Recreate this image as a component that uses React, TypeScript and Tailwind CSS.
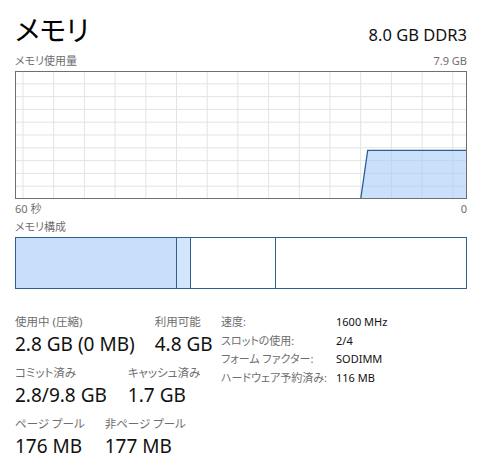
const font = { fontFamily: '"Noto Sans", "Noto Sans CJK JP", sans-serif', fontFeatureSettings: '"palt"' };

function UsageGraph() {
  const cols = Array.from({ length: 15 }, (_, i) => 8 + i * 30.7);
  const rows = Array.from({ length: 9 }, (_, i) => (i + 1) * 12.8);
  return (
    <svg width="452" height="128" viewBox="0 0 452 128" className="block">
      <rect x="0" y="0" width="452" height="128" fill="#ffffff" />
      {cols.map((x) => (
        <line key={"c" + x} x1={x} y1="0" x2={x} y2="128" stroke="#e3e3e3" strokeWidth="1" />
      ))}
      {rows.map((y) => (
        <line key={"r" + y} x1="0" y1={y} x2="452" y2={y} stroke="#e3e3e3" strokeWidth="1" />
      ))}
      <polygon points="345.7,128 352.7,79.3 452,79.3 452,128" fill="#a8cbf7" fillOpacity="0.6" />
      <polyline points="345.7,128 352.7,79.3 452,79.3" fill="none" stroke="#2b5f9c" strokeWidth="1.3" />
      <rect x="0.5" y="0.5" width="451" height="127" fill="none" stroke="#6f6f6f" strokeWidth="1" />
    </svg>
  );
}

function Stat({ label, value }: { label: string; value: string }) {
  return (
    <div className="flex flex-col">
      <span className="text-[11.5px] leading-[16px] text-[#6e6e6e]">{label}</span>
      <span className="text-[19px] leading-[29px] text-[#111]">{value}</span>
    </div>
  );
}

export default function App() {
  const specs = [
    ["速度:", "1600 MHz"],
    ["スロットの使用:", "2/4"],
    ["フォーム ファクター:", "SODIMM"],
    ["ハードウェア予約済み:", "116 MB"],
  ];
  return (
    <div className="w-[490px] h-[475px] bg-white pl-[15px] pr-[23px] pt-[12px]" style={font}>
      <div className="flex justify-between items-end">
        <h1 className="text-[28px] leading-[36px] text-black font-normal">メモリ</h1>
        <span className="text-[16.5px] leading-[22px] text-[#111] mb-[2px]">8.0 GB DDR3</span>
      </div>
      <div className="flex justify-between text-[11px] leading-[14px] text-[#6e6e6e] mt-[6px] mb-[3px]">
        <span>メモリ使用量</span>
        <span>7.9 GB</span>
      </div>
      <UsageGraph />
      <div className="flex justify-between text-[11px] leading-[14px] text-[#6e6e6e] mt-[3px]">
        <span>60 秒</span>
        <span>0</span>
      </div>
      <div className="text-[11px] leading-[14px] text-[#6e6e6e] mt-[4px] mb-[3px]">メモリ構成</div>
      <div className="flex w-[452px] h-[52px] border border-[#2d5f8f]">
        <div className="w-[161px] h-full bg-[#c8defb] border-r border-[#2d5f8f]" />
        <div className="w-[14px] h-full bg-[#d3e5fb] border-r border-[#2d5f8f]" />
        <div className="w-[85px] h-full bg-white border-r border-[#2d5f8f]" />
        <div className="flex-1 h-full bg-white" />
      </div>
      <div className="flex mt-[24px]">
        <div className="flex flex-col gap-[6px] w-[206px] pt-[1px]">
          <div className="flex gap-[20px]">
            <Stat label="使用中 (圧縮)" value="2.8 GB (0 MB)" />
            <Stat label="利用可能" value="4.8 GB" />
          </div>
          <div className="flex gap-[21px]">
            <Stat label="コミット済み" value="2.8/9.8 GB" />
            <Stat label="キャッシュ済み" value="1.7 GB" />
          </div>
          <div className="flex gap-[20px]">
            <Stat label="ページ プール" value="176 MB" />
            <Stat label="非ページ プール" value="177 MB" />
          </div>
        </div>
        <div className="grid grid-cols-[115px_auto] gap-y-[1px] text-[11px] leading-[17.5px] h-fit">
          {specs.map(([k, v]) => (
            <div key={k} className="contents">
              <span className="text-[#6e6e6e]">{k}</span>
              <span className="text-[#111]">{v}</span>
            </div>
          ))}
        </div>
      </div>
    </div>
  );
}
